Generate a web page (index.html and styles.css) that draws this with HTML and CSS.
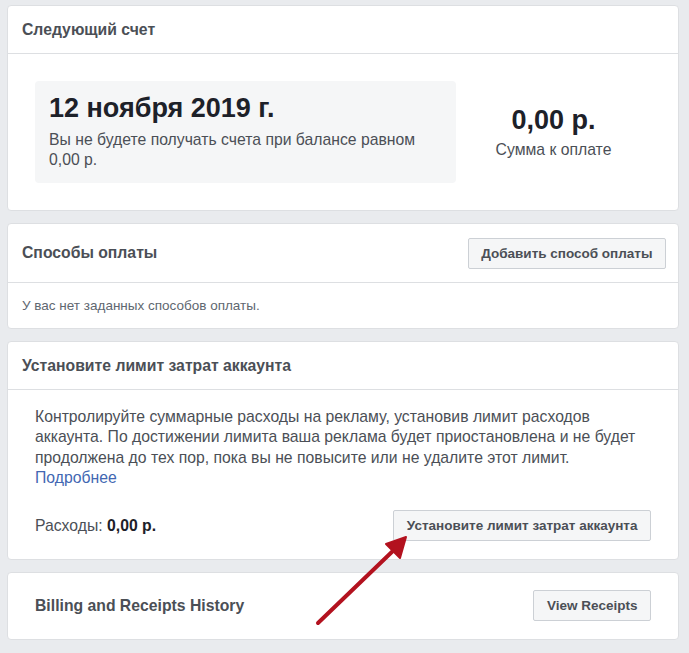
FILE: index.html
```html
<!DOCTYPE html>
<html lang="ru">
<head>
<meta charset="utf-8">
<link rel="stylesheet" href="styles.css">
</head>
<body>
<div class="page">
  <section class="card">
    <div class="card-head"><h2 class="card-title">Следующий счет</h2></div>
    <div class="next-body">
      <div class="date-box">
        <div class="date">12 ноября 2019 г.</div>
        <p class="date-note">Вы не будете получать счета при балансе равном 0,00 р.</p>
      </div>
      <div class="due">
        <div class="due-amount">0,00 р.</div>
        <div class="due-label">Сумма к оплате</div>
      </div>
    </div>
  </section>

  <section class="card">
    <div class="card-head card-head-btn">
      <h2 class="card-title">Способы оплаты</h2>
      <button class="btn">Добавить способ оплаты</button>
    </div>
    <div class="pay-body">У вас нет заданных способов оплаты.</div>
  </section>

  <section class="card">
    <div class="card-head"><h2 class="card-title">Установите лимит затрат аккаунта</h2></div>
    <div class="limit-body">
      <p class="limit-text">Контролируйте суммарные расходы на рекламу, установив лимит расходов аккаунта. По достижении лимита ваша реклама будет приостановлена и не будет продолжена до тех пор, пока вы не повысите или не удалите этот лимит. <a class="link" href="#">Подробнее</a></p>
      <div class="limit-row">
        <span class="spent">Расходы: <b>0,00 р.</b></span>
        <button class="btn">Установите лимит затрат аккаунта</button>
      </div>
    </div>
  </section>

  <section class="card history">
    <h2 class="history-title">Billing and Receipts History</h2>
    <button class="btn">View Receipts</button>
  </section>

  <svg class="arrow" width="120" height="110" viewBox="0 0 120 110" aria-hidden="true">
    <line x1="18" y1="103" x2="96" y2="28" stroke="#b3121f" stroke-width="4" stroke-linecap="round"/>
    <polygon points="106,17 86,24 100,38" fill="#b3121f" stroke="#b3121f" stroke-width="2" stroke-linejoin="round"/>
  </svg>
</div>
</body>
</html>
```

FILE: styles.css
```css
html, body {
  margin: 0;
  padding: 0;
  background: #e9ebee;
}
body {
  font-family: "Liberation Sans", Arial, sans-serif;
  color: #4b4f56;
}
.page {
  position: relative;
  width: 672px;
  padding: 5px 0 0 7px;
  display: flex;
  flex-direction: column;
  gap: 12px;
}
.card {
  background: #fff;
  border: 1px solid #dddfe2;
  border-radius: 4px;
}
.card-head {
  height: 47px;
  padding: 0 12px 0 14px;
  border-bottom: 1px solid #dddfe2;
  display: flex;
  align-items: center;
  justify-content: space-between;
}
.card-head-btn {
  height: 58px;
}
.card-title {
  margin: 0;
  font-size: 15.75px;
  font-weight: bold;
  color: #4b4f56;
}
.next-body {
  padding: 27px;
  display: flex;
  align-items: center;
}
.date-box {
  width: 421px;
  height: 102px;
  box-sizing: border-box;
  padding: 12px 14px;
  background: #f5f6f7;
  border-radius: 4px;
}
.date {
  font-size: 27px;
  font-weight: bold;
  color: #1d2129;
  line-height: 30px;
}
.date-note {
  margin: 7px 0 0;
  font-size: 15.75px;
  line-height: 19.5px;
  color: #4b4f56;
}
.due {
  flex: 1;
  text-align: center;
}
.due-amount {
  font-size: 27px;
  font-weight: bold;
  color: #1d2129;
  line-height: 30px;
}
.due-label {
  font-size: 15.75px;
  line-height: 20px;
  margin-top: 5px;
}
.btn {
  font-family: "Liberation Sans", Arial, sans-serif;
  font-size: 13.5px;
  font-weight: bold;
  color: #4b4f56;
  background: #f5f6f7;
  border: 1px solid #ccd0d5;
  border-radius: 2px;
  height: 31px;
  padding: 0 12.5px;
}
.pay-body {
  padding: 14px 14px;
  font-size: 13.5px;
  line-height: 17px;
  color: #606770;
}
.limit-body {
  padding: 17px 27px 18px;
}
.limit-text {
  margin: 0;
  font-size: 15.75px;
  line-height: 20.25px;
  color: #4b4f56;
}
.link {
  color: #4267b2;
  text-decoration: none;
}
.limit-row {
  margin-top: 22px;
  display: flex;
  align-items: center;
  justify-content: space-between;
}
.spent {
  font-size: 15.75px;
}
.spent b {
  color: #1d2129;
}
.history {
  padding: 17px 27px 18px;
  display: flex;
  align-items: center;
  justify-content: space-between;
}
.history-title {
  margin: 0;
  font-size: 15.75px;
  font-weight: bold;
  color: #4b4f56;
}
.arrow {
  position: absolute;
  left: 300px;
  top: 520px;
}
```
